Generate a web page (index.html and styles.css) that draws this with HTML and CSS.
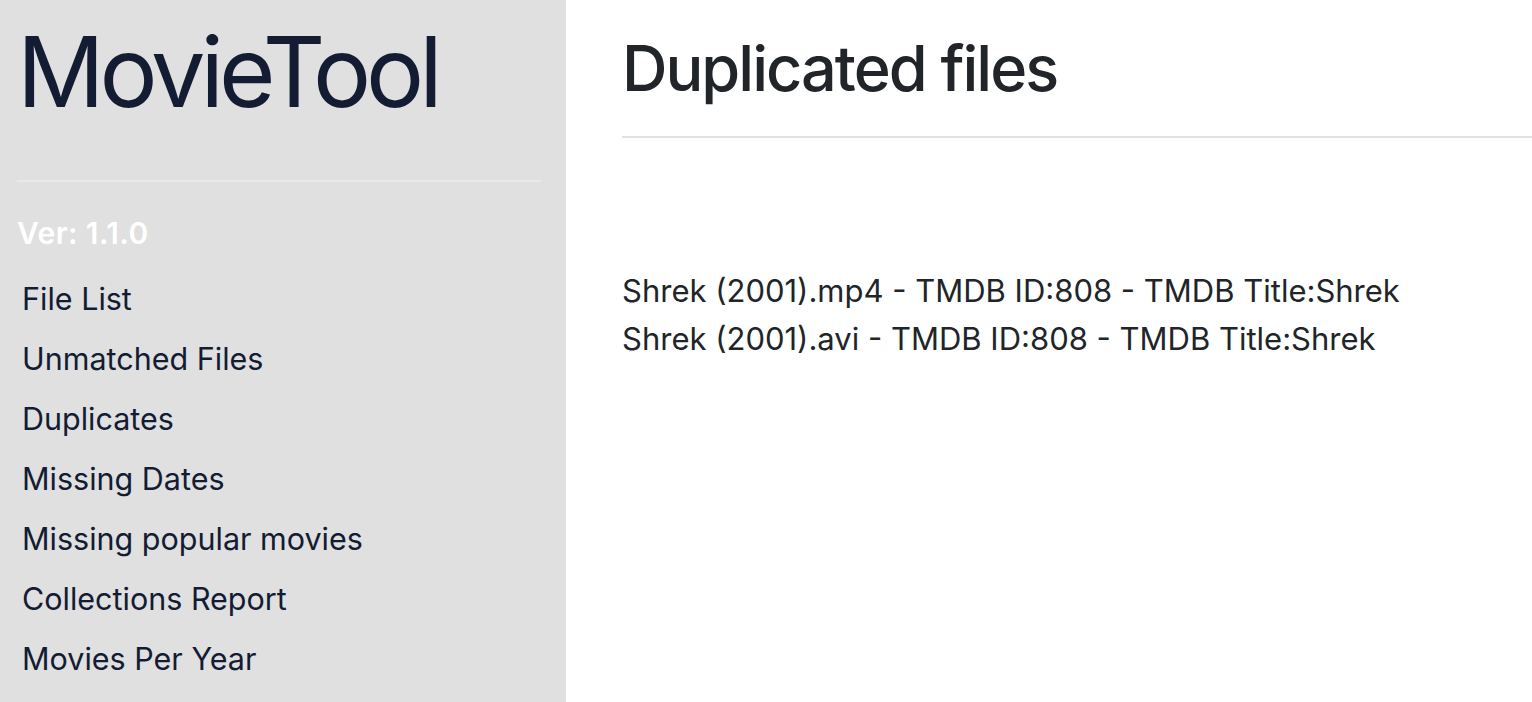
FILE: index.html
```html
<!DOCTYPE html>
<html lang="en">
<head>
<meta charset="utf-8">
<title>MovieTool</title>
<link rel="stylesheet" href="styles.css">
</head>
<body>
<aside class="sidebar">
  <h1 class="brand">MovieTool</h1>
  <hr class="side-rule">
  <div class="version">Ver: 1.1.0</div>
  <nav class="nav">
    <a class="nav-link" href="#">File List</a>
    <a class="nav-link" href="#">Unmatched Files</a>
    <a class="nav-link" href="#">Duplicates</a>
    <a class="nav-link" href="#">Missing Dates</a>
    <a class="nav-link" href="#">Missing popular movies</a>
    <a class="nav-link" href="#">Collections Report</a>
    <a class="nav-link" href="#">Movies Per Year</a>
  </nav>
</aside>
<main class="content">
  <h2 class="page-title">Duplicated files</h2>
  <hr class="main-rule">
  <div class="list">
    <div class="item">Shrek (2001).mp4 - TMDB ID:808 - TMDB Title:Shrek</div>
    <div class="item">Shrek (2001).avi - TMDB ID:808 - TMDB Title:Shrek</div>
  </div>
</main>
</body>
</html>
```
FILE: styles.css
```css
html, body {
  margin: 0;
  padding: 0;
  height: 100%;
}
body {
  display: flex;
  font-family: Inter, "Liberation Sans", sans-serif;
  color: #212529;
  background: #ffffff;
  overflow: hidden;
}
.sidebar {
  width: 566px;
  flex: 0 0 566px;
  background: #e0e0e0;
  box-sizing: border-box;
  padding: 12px 25px 0 17px;
  min-height: 100vh;
}
.brand {
  margin: 0;
  font-size: 97px;
  font-weight: 400;
  line-height: 120px;
  color: #131c32;
  letter-spacing: -5px;
}
.side-rule {
  margin: 48px 0 0 0;
  border: 0;
  border-top: 2px solid #e9e9e9;
  height: 0;
}
.version {
  margin-top: 31px;
  font-size: 30px;
  font-weight: 600;
  color: #ffffff;
  line-height: 40px;
  letter-spacing: 0.4px;
}
.nav {
  display: flex;
  flex-direction: column;
  margin-top: 16px;
}
.nav-link {
  display: block;
  padding: 11px 5px;
  font-size: 30.5px;
  line-height: 38px;
  color: #131c32;
  text-decoration: none;
}
.content {
  flex: 1;
  padding-left: 56px;
}
.page-title {
  margin: 0;
  padding-top: 28px;
  font-size: 63px;
  font-weight: 500;
  line-height: 80px;
  color: #212529;
  letter-spacing: -2px;
}
.main-rule {
  margin: 28px 0 0 0;
  border: 0;
  border-top: 2px solid #dee2e6;
  height: 0;
}
.list {
  margin-top: 129px;
}
.item {
  font-size: 31px;
  line-height: 48px;
  color: #212529;
}
```
